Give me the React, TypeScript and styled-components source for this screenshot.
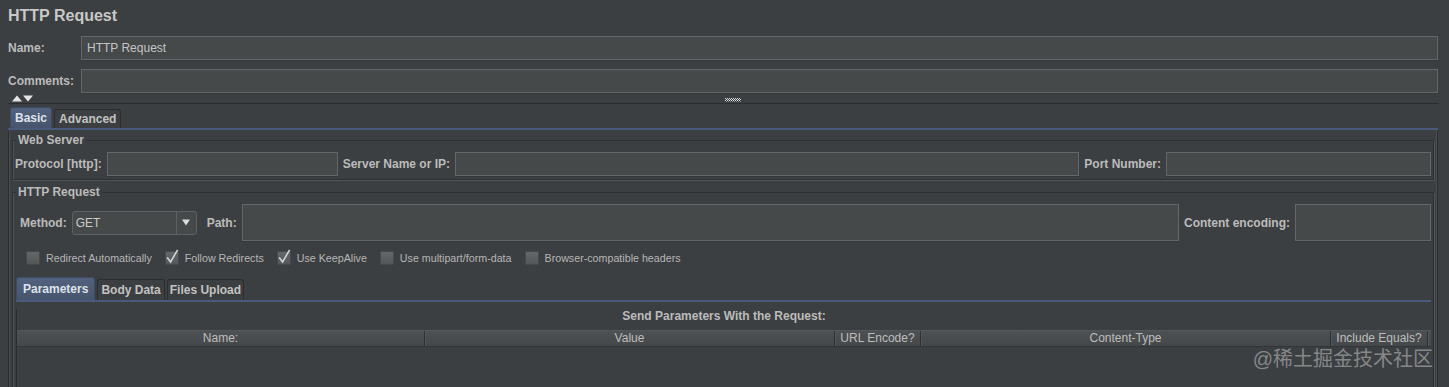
import React from 'react';
import styled, { createGlobalStyle } from 'styled-components';

const GlobalStyle = createGlobalStyle`
  html, body { margin: 0; padding: 0; background: #3c3f41; overflow: hidden; }
  body { font-family: "Liberation Sans", Arial, sans-serif; color: #bbbbbb; }
  * { box-sizing: border-box; }
`;

const Page = styled.div`
  position: relative;
  width: 1449px;
  height: 387px;
  overflow: hidden;
  padding: 0 11px 0 8px;
`;

const Title = styled.h1`
  margin: 6px 0 0;
  font-size: 16px;
  line-height: 20px;
  font-weight: bold;
  color: #c8c8c8;
`;

const NameGrid = styled.div`
  display: grid;
  grid-template-columns: 73px 1fr;
  row-gap: 9px;
  align-items: center;
  margin-top: 10px;
`;

const FieldLabel = styled.label`
  font-size: 12px;
  font-weight: bold;
  color: #bbbbbb;
  white-space: nowrap;
`;

const TextBox = styled.div<{ $h?: number; $w?: number }>`
  height: ${(p) => p.$h ?? 24}px;
  ${(p) => (p.$w ? `width:${p.$w}px; flex: 0 0 ${p.$w}px;` : 'flex: 1 1 auto; min-width: 0;')}
  background: #45494a;
  border: 1px solid #646667;
  box-shadow: 0 1px 0 #353738;
  font-size: 12px;
  color: #c4c4c4;
  padding: 0 5px;
  display: flex;
  align-items: center;
`;

const CollapseBar = styled.div`
  height: 11px;
  border-bottom: 1px solid #2a2c2d;
  display: grid;
  grid-template-columns: 1fr auto 1fr;
  align-items: start;
  padding: 2px 0 0 4px;
`;

const Grip = styled.div`
  margin-left: 16px;
  padding-top: 2px;
  line-height: 0;
`;

const TabStrip = styled.div<{ $h: number; $pad: number }>`
  display: flex;
  align-items: flex-end;
  gap: 2px;
  height: ${(p) => p.$h}px;
  padding-left: ${(p) => p.$pad}px;
  border-bottom: 2px solid #4a5a7b;
`;

const Tab = styled.div<{ $active?: boolean; $h: number; $px: number }>`
  height: ${(p) => p.$h}px;
  padding: 0 ${(p) => p.$px}px;
  display: flex;
  align-items: center;
  font-size: 12px;
  font-weight: bold;
  white-space: nowrap;
  color: ${(p) => (p.$active ? '#dde2ea' : '#c2c2c2')};
  background: ${(p) => (p.$active ? 'linear-gradient(#52617d, #46546d)' : '#3c3f41')};
  border: 1px solid ${(p) => (p.$active ? '#3e4b62' : '#2b2d2e')};
  border-bottom: none;
  border-radius: 3px 3px 0 0;
`;

const TabPanel = styled.div`
  border-left: 1px solid #2a2c2d;
  border-right: 1px solid #2a2c2d;
  box-shadow: inset 1px 0 0 #4b4e50, inset -1px 0 0 #4b4e50;
  padding: 3px 3px 0;
  height: 300px;
`;

const Group = styled.fieldset`
  margin: 0;
  padding: 5px 2px 3px 2px;
  border: 1px solid #2e3032;
  box-shadow: inset 1px 0 0 #515456, 1px 1px 0 #515456;
  min-width: 0;
  & + & {
    margin-top: 5px;
  }
`;

const Legend = styled.legend`
  padding: 0 2px;
  margin-left: 1px;
  font-size: 12px;
  font-weight: bold;
  line-height: 14px;
  color: #bbbbbb;
`;

const Row = styled.div<{ $h?: number; $inset?: number }>`
  display: flex;
  align-items: center;
  gap: 5px;
  height: ${(p) => p.$h ?? 24}px;
  margin-left: ${(p) => p.$inset ?? 0}px;
`;

const Select = styled.div`
  width: 125px;
  flex: 0 0 125px;
  height: 24px;
  display: flex;
  border: 1px solid #5e6163;
  border-radius: 3px;
  background: #45494a;
  margin-right: 5px;
`;

const SelectValue = styled.div`
  flex: 1;
  padding-left: 3px;
  font-size: 12px;
  color: #cccccc;
  display: flex;
  align-items: center;
`;

const SelectArrow = styled.div`
  width: 20px;
  border-left: 1px solid #5e6163;
  display: flex;
  align-items: center;
  justify-content: center;
`;

const CheckRow = styled.div`
  display: flex;
  align-items: center;
  gap: 13px;
  height: 14px;
  margin: 10px 0 0 11px;
`;

const CheckItem = styled.div`
  display: flex;
  align-items: center;
  gap: 6px;
  font-size: 10.7px;
  color: #b6b6b6;
  white-space: nowrap;
`;

const CheckBox = styled.svg`
  display: block;
  overflow: visible;
`;

const SubSection = styled.div`
  margin: 12px 0 0 1px;
`;

const ParamPanel = styled.div`
  border-left: 1px solid #2a2c2d;
  height: 120px;
`;

const ParamTitle = styled.div`
  margin-top: 7px;
  text-align: center;
  font-size: 12px;
  font-weight: bold;
  line-height: 14px;
  color: #bbbbbb;
`;

const TableHeader = styled.div`
  margin-top: 7px;
  display: grid;
  grid-template-columns: 408px 410px 86px 410px 97px;
  height: 17px;
  background: linear-gradient(#4e5153, #45484a);
  border-top: 1px solid #55585a;
  border-bottom: 1px solid #333536;
`;

const HeaderCell = styled.div`
  font-size: 12px;
  line-height: 15px;
  text-align: center;
  color: #bdbdbd;
  border-right: 1px solid #2c2e2f;
  box-shadow: 1px 0 0 #55585a;
  white-space: nowrap;
  overflow: hidden;
`;

const Watermark = styled.div`
  position: absolute;
  right: 16px;
  top: 347px;
  font-family: "Liberation Sans", "Noto Sans CJK SC", sans-serif;
  font-size: 20px;
  line-height: 24px;
  color: #858789;
  white-space: nowrap;
`;

const Check: React.FC<{ checked?: boolean; id: string }> = ({ checked, id }) => (
  <CheckBox width="14" height="14" viewBox="0 0 14 14">
    <defs>
      <linearGradient id={id} x1="0" y1="0" x2="0" y2="1">
        <stop offset="0" stopColor="#65686b" />
        <stop offset="1" stopColor="#535659" />
      </linearGradient>
    </defs>
    <rect x="0.5" y="0.5" width="13" height="13" rx="1" fill={`url(#${id})`} stroke="#48494b" />
    {checked && (
      <path d="M2.2 6.5 L5.6 11 L12.6 -1.2" stroke="#d2d2d2" strokeWidth="1.6" fill="none" strokeLinejoin="miter" />
    )}
  </CheckBox>
);

const checks = [
  { label: 'Redirect Automatically', checked: false },
  { label: 'Follow Redirects', checked: true },
  { label: 'Use KeepAlive', checked: true },
  { label: 'Use multipart/form-data', checked: false },
  { label: 'Browser-compatible headers', checked: false },
];

const columns = ['Name:', 'Value', 'URL Encode?', 'Content-Type', 'Include Equals?'];

export default function App() {
  return (
    <>
      <GlobalStyle />
      <Page>
        <Title>HTTP Request</Title>
        <NameGrid>
          <FieldLabel>Name:</FieldLabel>
          <TextBox>HTTP Request</TextBox>
          <FieldLabel>Comments:</FieldLabel>
          <TextBox />
        </NameGrid>
        <CollapseBar>
          <svg width="22" height="7" viewBox="0 0 22 7">
            <polygon points="0,6.5 5,0.5 10,6.5" fill="#e4e4e4" />
            <polygon points="11,0.5 21,0.5 16,6.5" fill="#e4e4e4" />
          </svg>
          <Grip>
            <svg width="16" height="4" viewBox="0 0 16 4">
              {Array.from({ length: 8 }).map((_, i) => (
                <React.Fragment key={i}>
                  <rect x={i * 2} y={0} width="1" height="1" fill="#dddddd" />
                  <rect x={i * 2 + 1} y={1} width="1" height="1" fill="#dddddd" />
                  <rect x={i * 2} y={2} width="1" height="1" fill="#dddddd" />
                  <rect x={i * 2 + 1} y={3} width="1" height="1" fill="#888888" />
                </React.Fragment>
              ))}
            </svg>
          </Grip>
          <span />
        </CollapseBar>
        <TabStrip $h={26} $pad={2}>
          <Tab $active $h={21} $px={4}>Basic</Tab>
          <Tab $h={19} $px={4}>Advanced</Tab>
        </TabStrip>
        <TabPanel>
          <Group>
            <Legend>Web Server</Legend>
            <Row>
              <FieldLabel>Protocol [http]:</FieldLabel>
              <TextBox $w={231} />
              <FieldLabel>Server Name or IP:</FieldLabel>
              <TextBox />
              <FieldLabel>Port Number:</FieldLabel>
              <TextBox $w={265} />
            </Row>
          </Group>
          <Group>
            <Legend>HTTP Request</Legend>
            <Row $h={37} $inset={5}>
              <FieldLabel>Method:</FieldLabel>
              <Select>
                <SelectValue>GET</SelectValue>
                <SelectArrow>
                  <svg width="8" height="7" viewBox="0 0 8 7">
                    <polygon points="0,0.5 8,0.5 4,6.5" fill="#dcdcdc" />
                  </svg>
                </SelectArrow>
              </Select>
              <FieldLabel>Path:</FieldLabel>
              <TextBox $h={37} />
              <FieldLabel>Content encoding:</FieldLabel>
              <TextBox $h={37} $w={136} />
            </Row>
            <CheckRow>
              {checks.map((c, i) => (
                <CheckItem key={c.label}>
                  <Check checked={c.checked} id={`cb${i}`} />
                  {c.label}
                </CheckItem>
              ))}
            </CheckRow>
            <SubSection>
              <TabStrip $h={25} $pad={0}>
                <Tab $active $h={23} $px={6}>Parameters</Tab>
                <Tab $h={21} $px={3}>Body Data</Tab>
                <Tab $h={21} $px={2}>Files Upload</Tab>
              </TabStrip>
              <ParamPanel>
                <ParamTitle>Send Parameters With the Request:</ParamTitle>
                <TableHeader>
                  {columns.map((c) => (
                    <HeaderCell key={c}>{c}</HeaderCell>
                  ))}
                </TableHeader>
              </ParamPanel>
            </SubSection>
          </Group>
        </TabPanel>
        <Watermark>@稀土掘金技术社区</Watermark>
      </Page>
    </>
  );
}
